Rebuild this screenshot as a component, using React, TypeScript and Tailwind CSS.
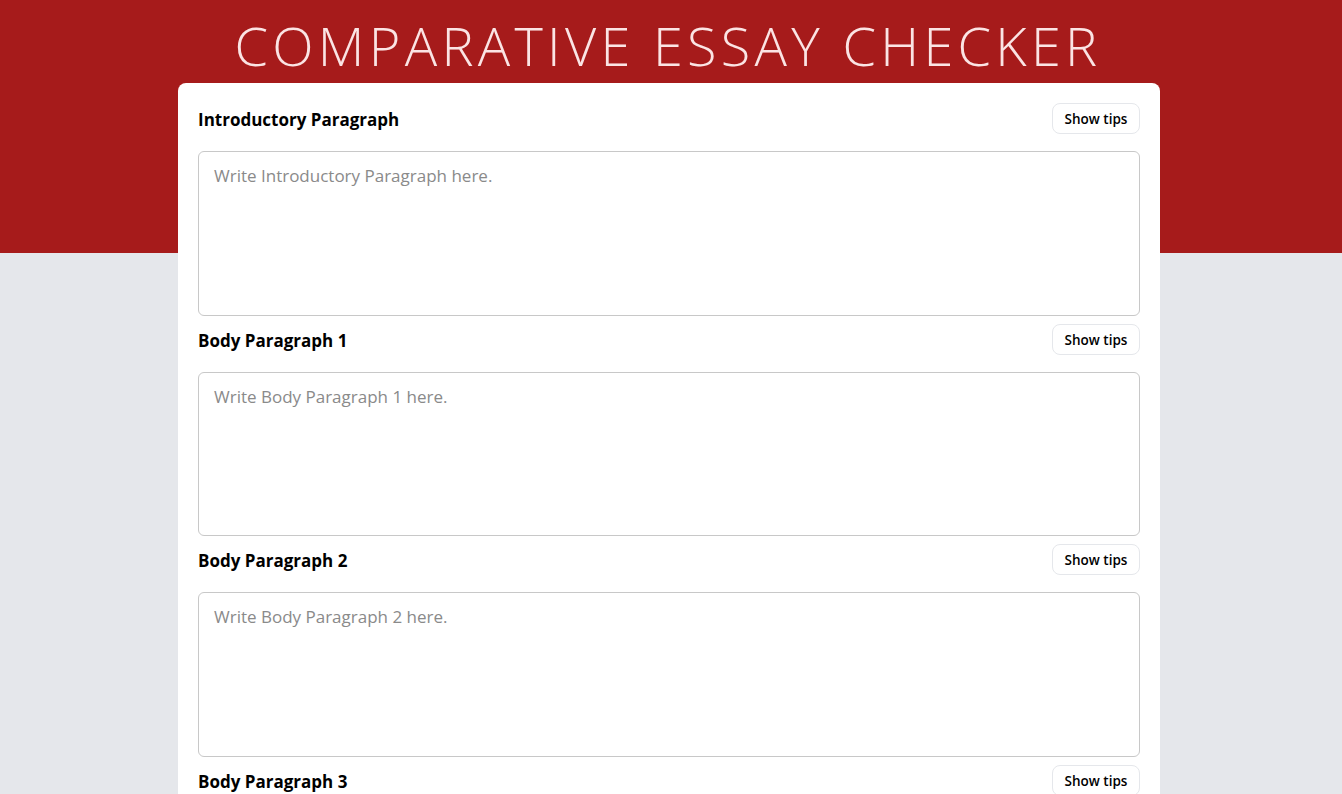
import React from 'react';

const sections = ['Introductory Paragraph', 'Body Paragraph 1', 'Body Paragraph 2', 'Body Paragraph 3'];

function Section({ title }: { title: string }) {
  return (
    <div className="mb-2">
      <div className="flex items-center justify-between mb-[17px]">
        <h2 className="pt-[3px] text-[17px] font-bold text-black">{title}</h2>
        <button className="h-[31px] w-[88px] pt-[2px] rounded-lg border border-gray-200 bg-white text-[13.5px] font-semibold text-black">
          Show tips
        </button>
      </div>
      <textarea
        placeholder={`Write ${title} here.`}
        className="block w-full h-[164.5px] resize-none rounded-md border border-[#c8c8c8] pl-[15px] pr-4 pt-[11px] text-[17px] text-gray-800 placeholder:text-[#8a8a8a] outline-none"
      />
    </div>
  );
}

export default function App() {
  return (
    <div
      className="min-h-[794px] bg-[linear-gradient(#a61b1b_253px,#e5e7eb_253px)]"
      style={{ fontFamily: '"Open Sans", "Noto Sans", sans-serif' }}
    >
      <h1 className="h-[83px] pt-[10px] pr-[6px] text-center text-[54px] leading-[70px] font-light tracking-[4.3px] text-[#fbe4e4]">
        COMPARATIVE ESSAY CHECKER
      </h1>
      <div className="ml-[178px] w-[982px] rounded-t-lg bg-white px-5 pt-5">
        {sections.map((s) => (
          <Section key={s} title={s} />
        ))}
      </div>
    </div>
  );
}
